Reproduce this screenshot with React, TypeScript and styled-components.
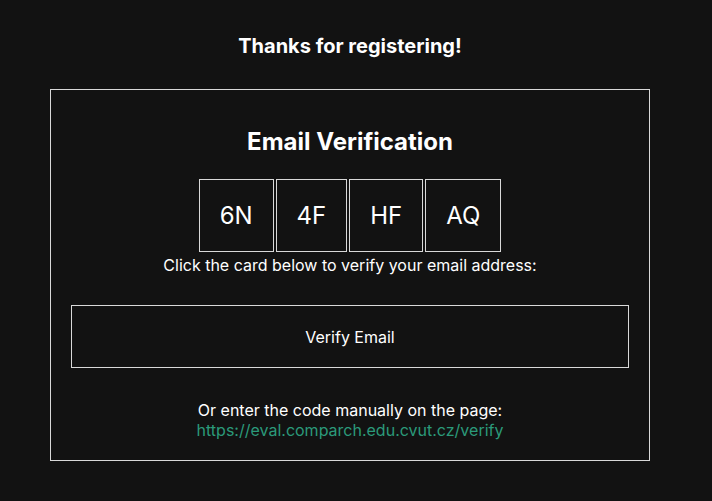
import React from 'react';
import styled, { createGlobalStyle } from 'styled-components';

const GlobalStyle = createGlobalStyle`
    html, body {
        margin: 0;
        padding: 0;
        background: #121212;
    }
    body {
        color: #ffffff;
        font-family: Inter, "Noto Sans", sans-serif;
    }
`;

const Page = styled.div`
    width: 700px;
    padding-top: 34px;
    display: flex;
    flex-direction: column;
    align-items: center;
`;

const Title = styled.h1`
    margin: 0;
    font-size: 20px;
    line-height: 24px;
    font-weight: 700;
`;

const Card = styled.div`
    box-sizing: border-box;
    width: 600px;
    margin-top: 31px;
    padding: 20px;
    border: 1px solid #d9d9d9;
    display: flex;
    flex-direction: column;
    align-items: center;
`;

const Heading = styled.h2`
    margin: 17px 0 0;
    font-size: 24px;
    line-height: 30px;
    font-weight: 700;
`;

const CodeRow = styled.div`
    display: flex;
    gap: 2px;
    margin-top: 22px;
`;

const CodeBox = styled.div`
    padding: 21.6px 20px;
    border: 1px solid #d9d9d9;
    font-size: 24px;
    line-height: 28px;
`;

const Hint = styled.p`
    margin: 3px 0 0;
    font-size: 16px;
    line-height: 20px;
`;

const VerifyButton = styled.button`
    box-sizing: border-box;
    width: 100%;
    margin-top: 30px;
    padding: 20.5px 20px;
    background: transparent;
    border: 1px solid #d9d9d9;
    color: #ffffff;
    font-family: Inter, "Noto Sans", sans-serif;
    font-size: 16px;
    line-height: 20px;
    cursor: pointer;
`;

const Manual = styled.p`
    margin: 31.5px 0 0.5px;
    font-size: 16px;
    line-height: 20px;
    text-align: center;
`;

const Link = styled.a`
    display: block;
    color: #2b9a7a;
    text-decoration: none;
`;

const code = ['6N', '4F', 'HF', 'AQ'];

const App = () => (
    <>
        <GlobalStyle />
        <Page>
            <Title>Thanks for registering!</Title>
            <Card>
                <Heading>Email Verification</Heading>
                <CodeRow>
                    {code.map(part => (
                        <CodeBox key={part}>{part}</CodeBox>
                    ))}
                </CodeRow>
                <Hint>Click the card below to verify your email address:</Hint>
                <VerifyButton type="button">Verify Email</VerifyButton>
                <Manual>
                    Or enter the code manually on the page:
                    <Link href="#">https://eval.comparch.edu.cvut.cz/verify</Link>
                </Manual>
            </Card>
        </Page>
    </>
);

export default App;
